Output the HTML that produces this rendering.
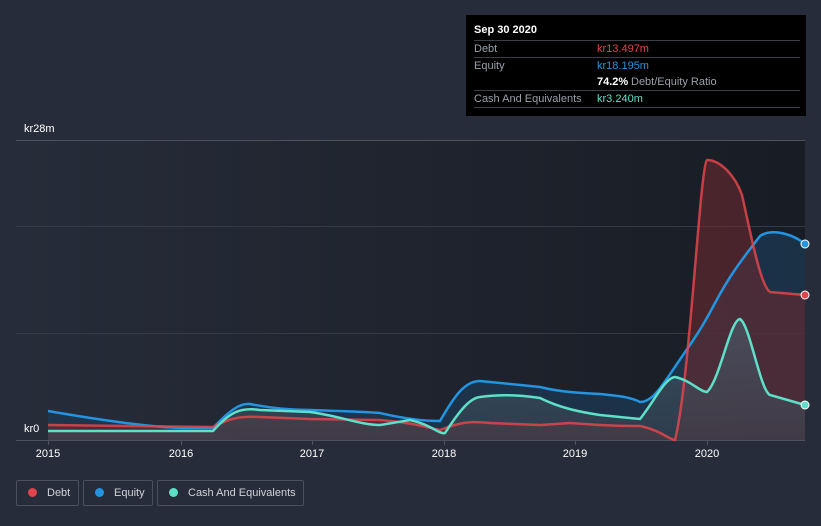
<!DOCTYPE html>
<html style="height:526px;overflow:hidden"><head><meta charset="utf-8"><style>
body{margin:0;width:821px;height:526px;background:#262c39;font-family:"Liberation Sans",sans-serif;overflow:hidden;position:relative}
.tt{position:absolute;left:466px;top:15px;width:340px;height:101px;background:#000;color:#fff;font-size:11px}
.tt .r{position:absolute;left:8px;right:6px;border-top:1px solid #3a3f47;height:17px}
.tt span{position:absolute;top:2px;white-space:nowrap}
.lab{color:#9aa0a8}
.leg{position:absolute;top:480px;height:26px;border:1px solid #4a505c;border-radius:2px;color:#d0d3d8;font-size:11px;line-height:24px;box-sizing:border-box;white-space:nowrap}
.leg i{display:inline-block;width:9px;height:9px;border-radius:50%;margin:0 10px 0 11px;vertical-align:-1px}
</style></head><body>
<svg width="821" height="526" style="position:absolute;left:0;top:0">
<defs>
<linearGradient id="pg" x1="0" x2="1"><stop offset="0" stop-color="#262c39"/><stop offset="1" stop-color="#181c24"/></linearGradient>
<linearGradient id="gf" x1="0" y1="0" x2="0" y2="1"><stop offset="0" stop-color="#4a6070" stop-opacity=".6"/><stop offset="1" stop-color="#3a4450" stop-opacity=".6"/></linearGradient>
</defs>
<rect x="16" y="140" width="789" height="300" fill="url(#pg)"/>
<line x1="16" y1="140.5" x2="805" y2="140.5" stroke="#4d535e"/>
<line x1="16" y1="226.5" x2="805" y2="226.5" stroke="#353b46"/>
<line x1="16" y1="333.5" x2="805" y2="333.5" stroke="#353b46"/>
<line x1="16" y1="440.5" x2="805" y2="440.5" stroke="#4d535e"/>
<g stroke="#4d535e"><line x1="48.5" y1="440" x2="48.5" y2="445"/><line x1="181.5" y1="440" x2="181.5" y2="445"/><line x1="312.5" y1="440" x2="312.5" y2="445"/><line x1="444.5" y1="440" x2="444.5" y2="445"/><line x1="575.5" y1="440" x2="575.5" y2="445"/><line x1="707.5" y1="440" x2="707.5" y2="445"/></g>
<path d="M48,411 C100,420 150,427 181,428 L213,428 C230,410 240,403 250,404 C270,408 290,410 310,410 C340,411 370,412 380,413 C410,420 430,421 440,421 C455,395 465,381 480,381 C500,383 520,385 540,387 C560,392 580,393 600,394 C620,396 630,397 640,402 C655,402 665,380 690,345 C700,330 705,322 715,303 C730,275 740,262 760,236 C770,229 790,232 805,244 L805,440 L48,440Z" fill="#1d3a55" fill-opacity=".7"/>
<path d="M48,425 L213,427 C230,418 240,416 260,417 L310,419 L380,420 C410,422 430,428 440,430 C460,422 470,421 490,423 L540,425 L570,423 L600,425 C620,426 630,426 640,426 C660,430 670,440 675,440 C690,380 700,165 707,160 C720,160 735,175 742,195 C750,230 760,285 770,292 L805,295 L805,440 L48,440Z" fill="#6a2a30" fill-opacity=".6"/>
<path d="M48,431 L213,431 C230,412 240,407 260,410 L310,412 C340,416 360,425 380,425 L410,420 C430,424 440,435 445,433 C460,410 470,398 480,397 C500,394 520,395 540,398 C560,408 580,412 600,415 L640,419 C655,400 665,378 675,377 C690,380 700,392 707,392 C720,380 730,320 740,319 C750,325 760,390 770,395 L805,405 L805,440 L48,440Z" fill="url(#gf)"/>
<path d="M48,411 C100,420 150,427 181,428 L213,428 C230,410 240,403 250,404 C270,408 290,410 310,410 C340,411 370,412 380,413 C410,420 430,421 440,421 C455,395 465,381 480,381 C500,383 520,385 540,387 C560,392 580,393 600,394 C620,396 630,397 640,402 C655,402 665,380 690,345 C700,330 705,322 715,303 C730,275 740,262 760,236 C770,229 790,232 805,244" fill="none" stroke="#2394e0" stroke-width="2.5"/>
<path d="M48,425 L213,427 C230,418 240,416 260,417 L310,419 L380,420 C410,422 430,428 440,430 C460,422 470,421 490,423 L540,425 L570,423 L600,425 C620,426 630,426 640,426 C660,430 670,440 675,440 C690,380 700,165 707,160 C720,160 735,175 742,195 C750,230 760,285 770,292 L805,295" fill="none" stroke="#e0454b" stroke-width="2.5" stroke-opacity=".85"/>
<path d="M48,431 L213,431 C230,412 240,407 260,410 L310,412 C340,416 360,425 380,425 L410,420 C430,424 440,435 445,433 C460,410 470,398 480,397 C500,394 520,395 540,398 C560,408 580,412 600,415 L640,419 C655,400 665,378 675,377 C690,380 700,392 707,392 C720,380 730,320 740,319 C750,325 760,390 770,395 L805,405" fill="none" stroke="#5ee0c8" stroke-width="2.5"/>
<circle cx="805" cy="244" r="4" fill="#2394e0" stroke="#fff" stroke-width="1"/>
<circle cx="805" cy="295" r="4" fill="#e0454b" stroke="#fff" stroke-width="1"/>
<circle cx="805" cy="405" r="4" fill="#5ee0c8" stroke="#fff" stroke-width="1"/>
<g fill="#fff" font-size="11" font-family="Liberation Sans,sans-serif">
<text x="24" y="132">kr28m</text><text x="24" y="432">kr0</text>
<g text-anchor="middle"><text x="48" y="457">2015</text><text x="181" y="457">2016</text><text x="312" y="457">2017</text><text x="444" y="457">2018</text><text x="575" y="457">2019</text><text x="707" y="457">2020</text></g>
</g>
</svg>
<div class="tt">
<div style="position:absolute;left:8px;top:9px;font-weight:bold">Sep 30 2020</div>
<div class="r" style="top:25px"><span class="lab">Debt</span><span style="left:123px;color:#e0454b">kr13.497m</span></div>
<div class="r" style="top:42px"><span class="lab">Equity</span><span style="left:123px;color:#2394e0">kr18.195m</span></div>
<div class="r" style="top:59px;border-top:none"><span style="left:123px;font-weight:bold">74.2%</span><span style="left:157px" class="lab">Debt/Equity Ratio</span></div>
<div class="r" style="top:75px"><span class="lab">Cash And Equivalents</span><span style="left:123px;color:#5ee0c8">kr3.240m</span></div>
<div class="r" style="top:92px;height:0"></div>
</div>
<div class="leg" style="left:16px;width:63px"><i style="background:#e0454b"></i>Debt</div>
<div class="leg" style="left:83px;width:70px"><i style="background:#2394e0"></i>Equity</div>
<div class="leg" style="left:157px;width:147px"><i style="background:#5ee0c8"></i>Cash And Equivalents</div>
</body></html>
